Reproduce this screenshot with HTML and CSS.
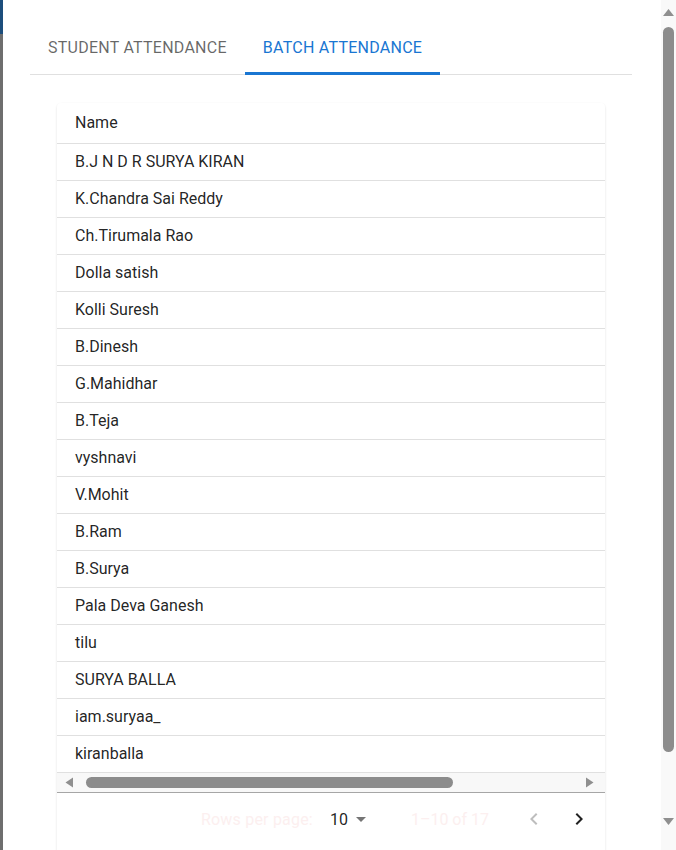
FILE: index.html
```html
<!DOCTYPE html>
<html lang="en">
<head>
<meta charset="utf-8">
<title>Batch Attendance</title>
<link rel="stylesheet" href="styles.css">
</head>
<body>
<div class="strip"></div>
<main class="dialog">
  <div class="tabs">
    <div class="tab">Student Attendance</div>
    <div class="tab active">Batch Attendance</div>
  </div>
  <div class="card">
    <div class="table-wrap">
      <table class="grid">
        <thead>
          <tr><th>Name</th></tr>
        </thead>
        <tbody>
          <tr><td>B.J N D R SURYA KIRAN</td></tr>
          <tr><td>K.Chandra Sai Reddy</td></tr>
          <tr><td>Ch.Tirumala Rao</td></tr>
          <tr><td>Dolla satish</td></tr>
          <tr><td>Kolli Suresh</td></tr>
          <tr><td>B.Dinesh</td></tr>
          <tr><td>G.Mahidhar</td></tr>
          <tr><td>B.Teja</td></tr>
          <tr><td>vyshnavi</td></tr>
          <tr><td>V.Mohit</td></tr>
          <tr><td>B.Ram</td></tr>
          <tr><td>B.Surya</td></tr>
          <tr><td>Pala Deva Ganesh</td></tr>
          <tr><td>tilu</td></tr>
          <tr><td>SURYA BALLA</td></tr>
          <tr><td>iam.suryaa_</td></tr>
          <tr><td>kiranballa</td></tr>
        </tbody>
      </table>
    </div>
    <div class="hbar">
      <svg class="sb-arrow left" width="15" height="15" viewBox="0 0 15 15"><polygon points="3.5,7.5 11,2.5 11,12.5"/></svg>
      <div class="hthumb"></div>
      <svg class="sb-arrow right" width="15" height="15" viewBox="0 0 15 15"><polygon points="4,2.5 11.5,7.5 4,12.5"/></svg>
    </div>
    <div class="pagination">
      <span class="faint rows-label">Rows per page:</span>
      <span class="per-page">10</span>
      <svg class="drop" width="24" height="24" viewBox="0 0 24 24"><path d="M7 10l5 5 5-5z"/></svg>
      <span class="faint range">1–10 of 17</span>
      <svg class="nav prev" width="24" height="24" viewBox="0 0 24 24"><path d="M15.41 7.41L14 6l-6 6 6 6 1.41-1.41L10.83 12z"/></svg>
      <svg class="nav next" width="24" height="24" viewBox="0 0 24 24"><path d="M10 6L8.59 7.41 13.17 12l-4.58 4.59L10 18l6-6z"/></svg>
    </div>
  </div>
</main>
<div class="vbar">
  <svg class="sb-arrow up" width="15" height="15" viewBox="0 0 15 15"><polygon points="2,11 13,11 7.5,4"/></svg>
  <div class="vthumb"></div>
  <svg class="sb-arrow down" width="15" height="15" viewBox="0 0 15 15"><polygon points="2,4 13,4 7.5,11"/></svg>
</div>
</body>
</html>
```

FILE: styles.css
```css
html, body {
  margin: 0;
  padding: 0;
  background: #ffffff;
}

body {
  display: flex;
  height: 100vh;
  overflow: hidden;
  font-family: Roboto, "Liberation Sans", sans-serif;
  color: rgba(0, 0, 0, 0.87);
}

.strip {
  flex: 0 0 3px;
  background: linear-gradient(#1d4e7c 0, #1d4e7c 34px, #6e6e6e 34px, #6e6e6e 100%);
}

.dialog {
  flex: 1;
  min-width: 0;
  overflow: hidden;
  padding: 27px 29px 0 27px;
}

/* tabs */
.tabs {
  display: flex;
  height: 47px;
  border-bottom: 1px solid #e0e0e0;
}

.tab {
  box-sizing: border-box;
  height: 48px;
  margin-bottom: -1px;
  padding: 9px 18px 0;
  font-size: 16px;
  line-height: 24px;
  letter-spacing: 0.25px;
  text-transform: uppercase;
  color: rgba(0, 0, 0, 0.6);
  border-bottom: 3px solid transparent;
}

.tab.active {
  color: #1976d2;
  border-bottom-color: #1976d2;
}

/* card + table */
.card {
  margin: 28px 27px 0;
  padding-bottom: 40px;
  border-radius: 4px;
  overflow: hidden;
  background: #fff;
  box-shadow: 0 1px 2px rgba(0, 0, 0, 0.08), 0 1px 3px rgba(0, 0, 0, 0.06);
}

.table-wrap {
  overflow: hidden;
}

.grid {
  width: 100%;
  min-width: 750px;
  border-collapse: collapse;
  font-size: 16px;
}

.grid th,
.grid td {
  text-align: left;
  font-weight: 400;
  line-height: 24px;
  padding: 6px 18px;
  border-bottom: 1px solid #e0e0e0;
  white-space: nowrap;
}

.grid th {
  padding: 8px 18px;
}

/* drawn scrollbars */
.sb-arrow {
  flex: 0 0 auto;
  fill: #8f8f8f;
}

.hbar {
  display: flex;
  align-items: center;
  height: 19px;
  background: #f8f8f8;
  border-bottom: 1px solid #a6a6a6;
}

.hbar .left {
  margin-left: 5px;
}

.hthumb {
  width: 367px;
  height: 11px;
  margin-left: 9px;
  border-radius: 6px;
  background: #8c8c8c;
}

.hbar .right {
  margin-left: auto;
  margin-right: 8px;
}

.vbar {
  flex: 0 0 15px;
  display: flex;
  flex-direction: column;
  align-items: center;
  background: #f9f9f9;
}

.vbar .up {
  margin-top: 5px;
}

.vthumb {
  width: 11px;
  height: 725px;
  margin-top: 7px;
  border-radius: 6px;
  background: #8c8c8c;
}

.vbar .down {
  margin-top: auto;
  margin-bottom: 21px;
}

/* pagination */
.pagination {
  display: flex;
  align-items: center;
  justify-content: flex-end;
  height: 52px;
  padding-right: 14px;
  font-size: 16px;
}

.faint {
  color: #fcefef;
}

.rows-label {
  margin-right: 17px;
  letter-spacing: 0.2px;
}

.per-page {
  color: rgba(0, 0, 0, 0.87);
}

.drop {
  margin-left: 1px;
  margin-right: 38px;
  fill: rgba(0, 0, 0, 0.54);
}

.range {
  margin-right: 33px;
}

.nav.prev {
  fill: rgba(0, 0, 0, 0.26);
  margin-right: 21px;
}

.nav.next {
  fill: rgba(0, 0, 0, 0.87);
}
```
